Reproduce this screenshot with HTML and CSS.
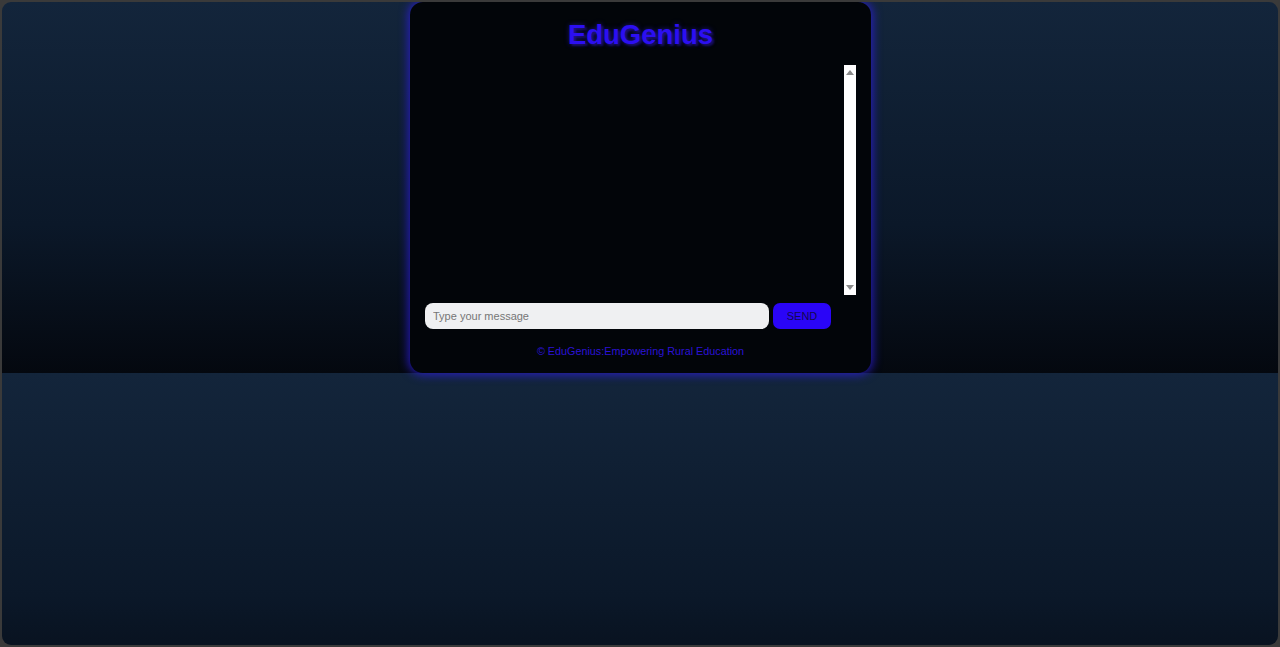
FILE: index.html
```html
<!DOCTYPE html>
<html lang="en">
<head>
<meta charset="utf-8">
<title>EduGenius</title>
<link rel="stylesheet" href="styles.css">
</head>
<body>
  <div class="chat-container">
    <h1 class="title">EduGenius</h1>
    <div class="chat-box">
      <div class="messages"></div>
      <div class="scrollbar">
        <span class="arrow up"></span>
        <span class="arrow down"></span>
      </div>
    </div>
    <div class="input-row">
      <input class="msg-input" type="text" placeholder="Type your message">
      <button class="send-btn">SEND</button>
    </div>
    <p class="footer">© EduGenius:Empowering Rural Education</p>
  </div>
</body>
</html>
```

FILE: styles.css
```css
html {
  background: #3a3a3a;
  height: 100%;
}
body {
  margin: 2px;
  height: 643px;
  border-radius: 9px;
  background: linear-gradient(180deg, #13253b 0%, #0b1829 60%, #04080f 100%);
  background-size: 100% 371px;
  background-repeat: repeat-y;
  display: flex;
  justify-content: center;
  align-items: flex-start;
  font-family: "Liberation Sans", Arial, sans-serif;
  overflow: hidden;
}
.chat-container {
  width: 431px;
  padding: 17px 15px 15px;
  margin-left: 1px;
  background: #020509;
  border-radius: 13px;
  box-shadow: 0 0 10px 2px rgba(45, 30, 230, 0.75);
  display: flex;
  flex-direction: column;
}
.title {
  margin: 0;
  text-align: center;
  font-size: 27.5px;
  line-height: 31px;
  font-weight: bold;
  color: #2c0ff2;
  text-shadow: 0 0 5px rgba(60, 40, 255, 0.5), 2px 2px 2px rgba(40, 20, 160, 0.45);
}
.chat-box {
  margin-top: 15px;
  height: 230px;
  display: flex;
}
.messages {
  flex: 1;
}
.scrollbar {
  width: 12px;
  background: #ffffff;
  display: flex;
  flex-direction: column;
  justify-content: space-between;
  align-items: center;
  padding: 5px 0;
  box-sizing: border-box;
}
.arrow {
  width: 0;
  height: 0;
  border-left: 4px solid transparent;
  border-right: 4px solid transparent;
}
.arrow.up {
  border-bottom: 5px solid #8a8a8a;
}
.arrow.down {
  border-top: 5px solid #8a8a8a;
}
.input-row {
  margin-top: 8px;
  display: flex;
  gap: 4px;
  width: 406px;
}
.msg-input {
  flex: 1;
  height: 26px;
  box-sizing: border-box;
  border: none;
  border-radius: 8px;
  background: #eff0f2;
  padding: 0 8px;
  font-family: "Liberation Sans", Arial, sans-serif;
  font-size: 11px;
  color: #333;
  outline: none;
}
.msg-input::placeholder {
  color: #767676;
}
.send-btn {
  width: 58px;
  height: 26px;
  border: none;
  border-radius: 7px;
  background: #2a05f7;
  color: #140850;
  font-family: "Liberation Sans", Arial, sans-serif;
  font-size: 11px;
  padding: 0;
}
.footer {
  margin: 16px 0 0;
  text-align: center;
  font-size: 10.8px;
  line-height: 13px;
  color: #2b12d6;
}
```
